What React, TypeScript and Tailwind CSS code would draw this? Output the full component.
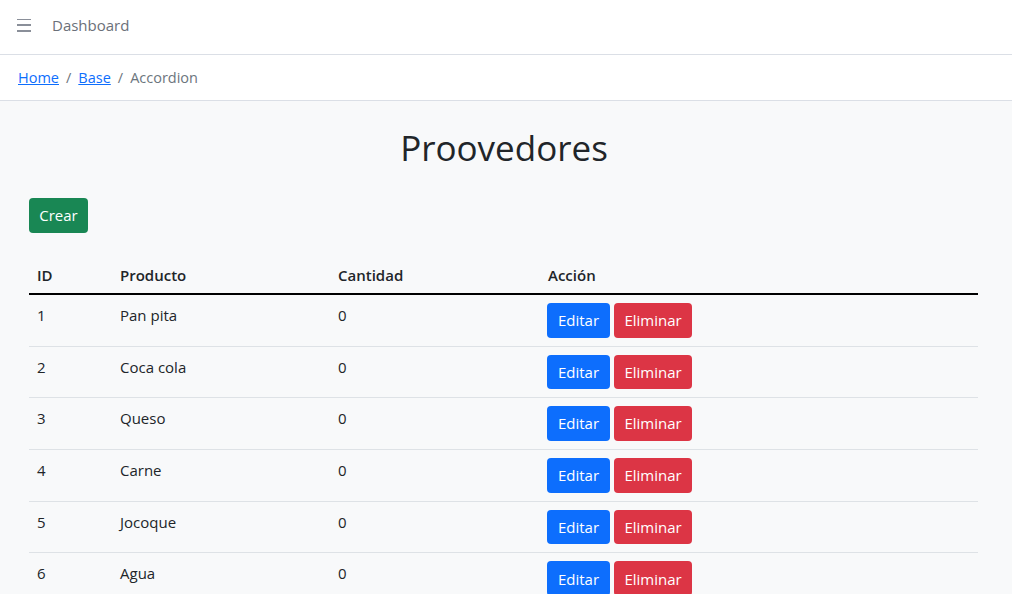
import React from "react";

interface Proveedor {
  id: number;
  producto: string;
  cantidad: number;
}

const proveedores: Proveedor[] = [
  { id: 1, producto: "Pan pita", cantidad: 0 },
  { id: 2, producto: "Coca cola", cantidad: 0 },
  { id: 3, producto: "Queso", cantidad: 0 },
  { id: 4, producto: "Carne", cantidad: 0 },
  { id: 5, producto: "Jocoque", cantidad: 0 },
  { id: 6, producto: "Agua", cantidad: 0 },
];

export default function App() {
  return (
    <div className="min-h-screen bg-[#f8f9fa] text-[#212529] font-['Segoe_UI','Open_Sans','Noto_Sans',sans-serif] text-[15px]">
      {/* Header */}
      <header className="h-[55px] bg-white border-b border-[#dbdfe6] flex items-center pb-[4px]">
        <button className="ml-[17px] w-[15px] h-[13px] flex flex-col justify-between">
          <span className="block h-[1.5px] w-[14px] bg-[#8a8f99]" />
          <span className="block h-[1.5px] w-[14px] bg-[#8a8f99]" />
          <span className="block h-[1.5px] w-[14px] bg-[#8a8f99]" />
        </button>
        <span className="ml-[20px] text-[#6b7079] text-[15px]">Dashboard</span>
      </header>

      {/* Breadcrumb */}
      <nav className="h-[46px] bg-white border-b border-[#dbdfe6] flex items-center px-[18px] text-[14.5px]">
        <a href="#" className="text-[#0d6efd] underline">Home</a>
        <span className="mx-[7px] text-[#6c757d]">/</span>
        <a href="#" className="text-[#0d6efd] underline">Base</a>
        <span className="mx-[7px] text-[#6c757d]">/</span>
        <span className="text-[#6c757d]">Accordion</span>
      </nav>

      {/* Contenido */}
      <main className="px-[29px] pt-[23px]">
        <h1 className="text-center text-[35px] leading-[48px] font-normal pr-[4px]">Proovedores</h1>

        <button className="mt-[26px] h-[35px] w-[59px] rounded-[4px] bg-[#198754] text-white">
          Crear
        </button>

        <table className="mt-[25px] w-[949px] border-collapse text-left">
          <thead>
            <tr className="border-b-2 border-black">
              <th className="w-[83px] px-[8px] py-[6px] leading-[23px] font-semibold">ID</th>
              <th className="w-[218px] px-[8px] py-[6px] leading-[23px] font-semibold">Producto</th>
              <th className="w-[210px] px-[8px] py-[6px] leading-[23px] font-semibold">Cantidad</th>
              <th className="px-[8px] py-[6px] leading-[23px] font-semibold">Acción</th>
            </tr>
          </thead>
          <tbody>
            {proveedores.map((p) => (
              <tr key={p.id} className="border-b border-[#dee2e6]">
                <td className="px-[8px] py-[8px] align-top leading-[24px]">{p.id}</td>
                <td className="px-[8px] py-[8px] align-top leading-[24px]">{p.producto}</td>
                <td className="px-[8px] py-[8px] align-top leading-[24px]">{p.cantidad}</td>
                <td className="px-[7px] py-[8px]">
                  <div className="flex gap-[4px]">
                    <button className="h-[34.7px] w-[63px] rounded-[4px] bg-[#0d6efd] text-white">Editar</button>
                    <button className="h-[34.7px] w-[78px] rounded-[4px] bg-[#dc3545] text-white">Eliminar</button>
                  </div>
                </td>
              </tr>
            ))}
          </tbody>
        </table>
      </main>
    </div>
  );
}
